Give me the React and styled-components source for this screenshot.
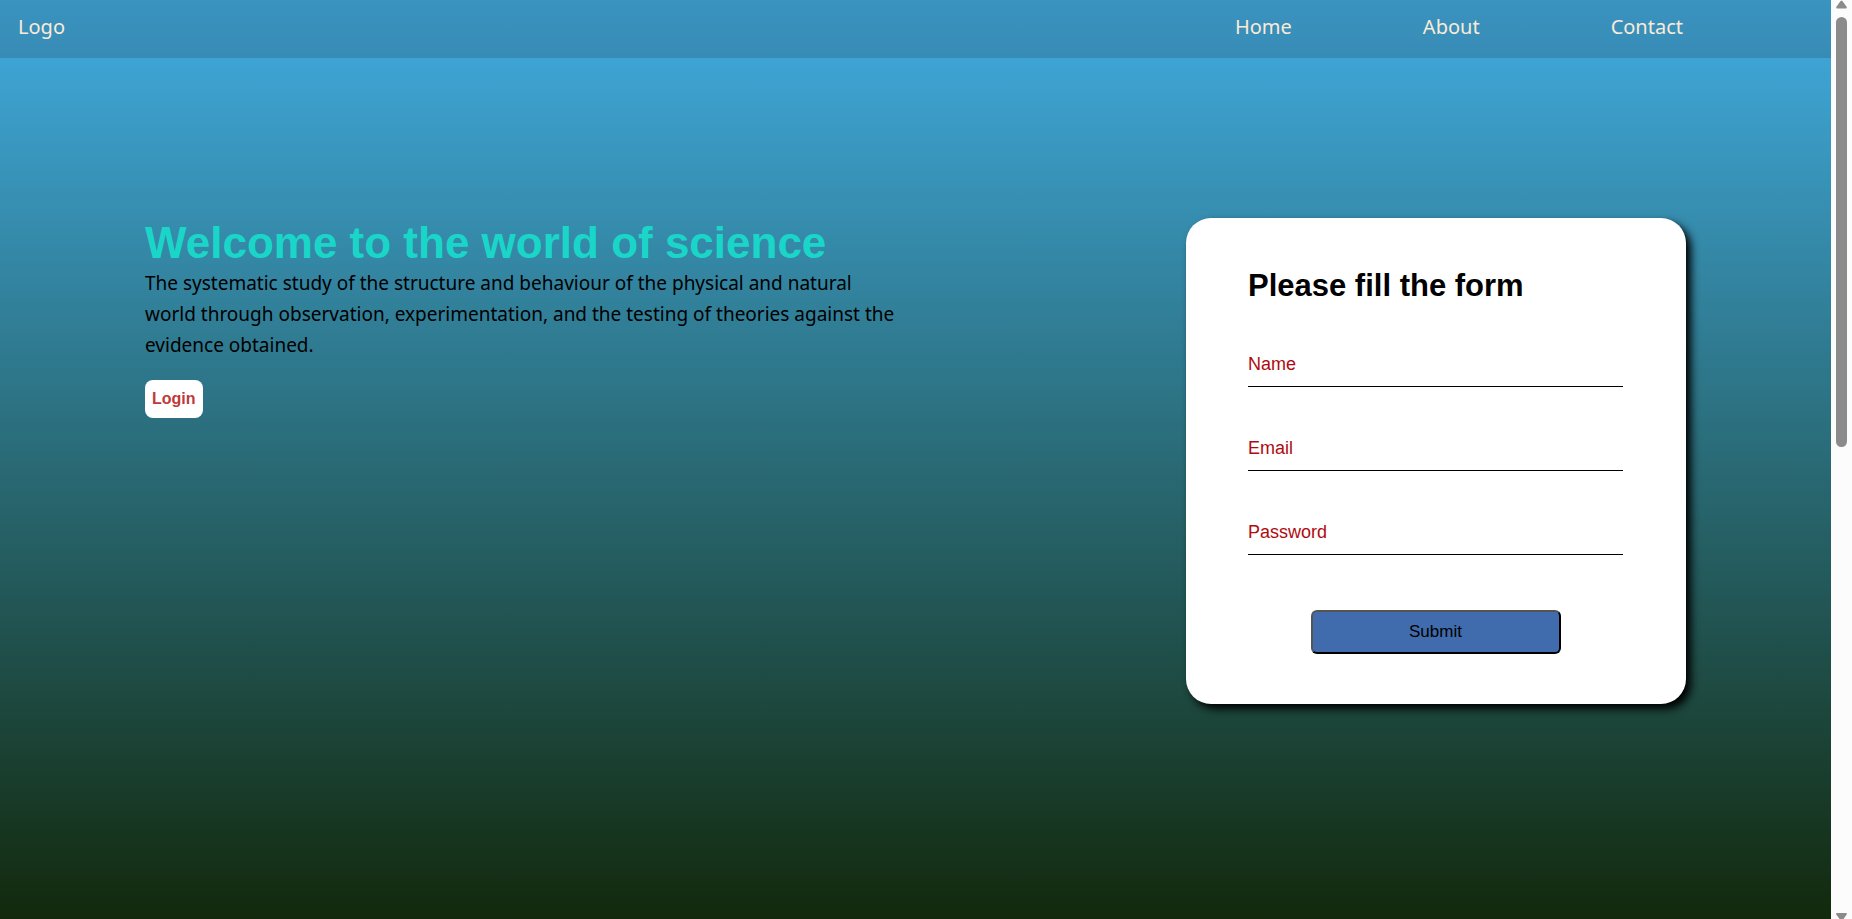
import React from "react";
import styled, { createGlobalStyle } from "styled-components";

const GlobalStyle = createGlobalStyle`
  *, *::before, *::after { box-sizing: border-box; }
  body { margin: 0; font-family: "Liberation Sans", Arial, sans-serif; }
  h1, h2, p { margin: 0; }
`;

const Window = styled.div`
  display: flex;
  height: 100vh;
  overflow: hidden;
`;

const Page = styled.div`
  flex: 1;
  min-width: 0;
  background: linear-gradient(#41ace1, #12290c);
`;

const NavBar = styled.header`
  display: flex;
  justify-content: space-between;
  align-items: flex-start;
  height: 58px;
  padding: 13px 148px 0 18px;
  background: rgba(20, 10, 10, 0.15);
  font-family: "Noto Sans", sans-serif;
  font-size: 20px;
  line-height: 28px;
`;

const NavLinks = styled.nav`
  display: flex;
  gap: 131px;
`;

const NavLink = styled.a`
  color: antiquewhite;
  text-decoration: none;
`;

const Hero = styled.main`
  display: flex;
  justify-content: space-between;
  align-items: flex-start;
  padding: 160px 145px 0;
`;

const Intro = styled.section`
  width: 756px;
`;

const Title = styled.h1`
  color: #1ad6c8;
  font-size: 44px;
  line-height: 50px;
`;

const Lead = styled.p`
  font-family: "Noto Sans", sans-serif;
  font-size: 19px;
  line-height: 31px;
`;

const LoginButton = styled.button`
  height: 38px;
  margin-top: 19px;
  padding: 0 7px;
  border: 0;
  border-radius: 8px;
  background: #fff;
  color: #bd3a3a;
  font: bold 16px "Liberation Sans", Arial, sans-serif;
`;

const FormCard = styled.form`
  display: flex;
  flex-direction: column;
  width: 500px;
  padding: 50px 63px 50px 62px;
  border-radius: 25px;
  background: #fff;
  box-shadow: 5px 5px 8px #000;
`;

const FormTitle = styled.h2`
  margin-bottom: 34px;
  font-size: 31px;
  line-height: 36px;
`;

const Field = styled.input`
  height: 49px;
  margin-bottom: 35px;
  padding: 4px 0 0;
  border: 0;
  border-bottom: 1px solid #000;
  background: transparent;
  font: 18px "Liberation Sans", Arial, sans-serif;
  outline: none;

  &::placeholder { color: #b00a10; opacity: 1; }
`;

const SubmitButton = styled.button`
  align-self: center;
  width: 250px;
  height: 44px;
  margin-top: 20px;
  border: 2px outset #000;
  border-radius: 6px;
  background: #406bad;
  color: #000;
  font: 17px "Liberation Sans", Arial, sans-serif;
`;

const ScrollTrack = styled.div`
  display: flex;
  flex-direction: column;
  align-items: center;
  flex: none;
  width: 21px;
  background: #fcfcfc;
`;

const ScrollThumb = styled.div`
  width: 11px;
  height: 430px;
  margin: 8px 0 auto;
  border-radius: 6px;
  background: #8b8b8b;
`;

const Arrow = styled.svg`
  display: block;
  flex: none;
  width: 11px;
  height: ${(p) => (p.$down ? 6 : 9)}px;
  fill: #8b8b8b;
`;

export default function App() {
  return (
    <Window>
      <GlobalStyle />
      <Page>
        <NavBar>
          <NavLink href="#">Logo</NavLink>
          <NavLinks>
            <NavLink href="#home">Home</NavLink>
            <NavLink href="#about">About</NavLink>
            <NavLink href="#contact">Contact</NavLink>
          </NavLinks>
        </NavBar>
        <Hero>
          <Intro>
            <Title>Welcome to the world of science</Title>
            <Lead>
              The systematic study of the structure and behaviour of the physical and natural
              world through observation, experimentation, and the testing of theories against the
              evidence obtained.
            </Lead>
            <LoginButton type="button">Login</LoginButton>
          </Intro>
          <FormCard>
            <FormTitle>Please fill the form</FormTitle>
            <Field type="text" placeholder="Name" aria-label="Name" />
            <Field type="email" placeholder="Email" aria-label="Email" />
            <Field type="password" placeholder="Password" aria-label="Password" />
            <SubmitButton type="submit">Submit</SubmitButton>
          </FormCard>
        </Hero>
      </Page>
      <ScrollTrack aria-hidden="true">
        <Arrow viewBox="0 0 11 9"><path d="M4.6 1Q5.5 0 6.4 1L10.8 7Q11 8.5 9.8 8.6H1.2Q0 8.5.2 7Z" /></Arrow>
        <ScrollThumb />
        <Arrow $down viewBox="0 0 11 6"><path d="M1 0H10Q11.3.4 10.7 1.6L7.5 6H3.5L.3 1.6Q-.3.4 1 0Z" /></Arrow>
      </ScrollTrack>
    </Window>
  );
}
